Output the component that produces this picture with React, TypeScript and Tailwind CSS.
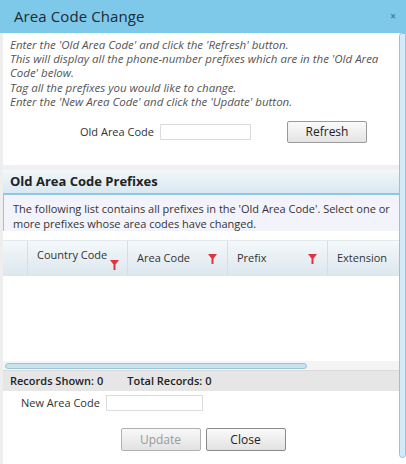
import React from 'react';

const Filter = () => (
  <svg width="9" height="10" viewBox="0 0 9 10" className="shrink-0">
    <path d="M0 0 H9 L5.5 4.5 V10 H3.5 V4.5 Z" fill="#e0343c" />
  </svg>
);

export default function App() {
  return (
    <div
      className="w-[406px] h-[464px] bg-white flex flex-col overflow-hidden text-[#333]"
      style={{ fontFamily: '"Open Sans", "Liberation Sans", sans-serif' }}
    >
      <div className="h-[33px] shrink-0 bg-[#7ec8ea] flex items-center justify-between pl-[14px] pr-[10px]">
        <span className="text-[15px] text-[#1e2a33] tracking-[0.1px]">Area Code Change</span>
        <span className="text-[10px] text-[#4a7f9c] font-bold">×</span>
      </div>

      <div className="flex flex-1 min-h-0">
        <div className="w-[3px] bg-[#eeeeee] shrink-0" />
        <div className="flex-1 flex flex-col min-w-0">
          <div className="pl-[7px] pt-[5px] text-[11.5px] leading-[14.2px] italic text-[#555]">
            <div>Enter the 'Old Area Code' and click the 'Refresh' button.</div>
            <div>This will display all the phone-number prefixes which are in the 'Old Area Code' below.</div>
            <div>Tag all the prefixes you would like to change.</div>
            <div>Enter the 'New Area Code' and click the 'Update' button.</div>
          </div>
          <div className="flex items-center mt-[11px] h-[24px] text-[11px] text-[#333]">
            <span className="ml-[77px] w-[80px]">Old Area Code</span>
            <div className="w-[91px] h-[16px] border border-[#dcdcdc] bg-white" />
            <button className="ml-[36px] w-[80px] h-[22px] border border-[#9a9a9a] rounded-[2px] bg-gradient-to-b from-[#fafafa] to-[#e4e4e4] text-[12px] text-[#222]">
              Refresh
            </button>
          </div>
          <div className="h-[5px] mt-[21px] bg-[#f0f0f0]" />
          <div className="h-[25px] flex items-center pl-[7px] bg-gradient-to-b from-[#f2f7fa] to-[#d9e8f0] border-b-2 border-[#8ec7e4] text-[13px] font-bold text-[#222]">
            Old Area Code Prefixes
          </div>
          <div className="h-[36px] bg-[#f3f3fb] border-l border-[#8ec7e4] pl-[9px] pt-[6px] text-[11px] leading-[15px] text-[#333]">
            The following list contains all prefixes in the 'Old Area Code'. Select one or more prefixes whose area codes have changed.
          </div>
          <div className="h-[9px] bg-white" />
          <div className="h-[36px] flex bg-gradient-to-b from-[#f4f8fa] to-[#dbe7ee] text-[11px] text-[#333] border-t border-[#e2e8ec]">
            <div className="w-[25px] border-r border-[#d6dee3]" />
            <div className="w-[100px] border-r border-[#d6dee3] pl-[9px] pt-[6px] relative">
              Country Code
              <span className="absolute left-[82px] top-[19px]"><Filter /></span>
            </div>
            <div className="w-[100px] border-r border-[#d6dee3] pl-[9px] pr-[10px] flex items-center justify-between">
              <span>Area Code</span>
              <Filter />
            </div>
            <div className="w-[100px] border-r border-[#d6dee3] pl-[9px] pr-[10px] flex items-center justify-between">
              <span>Prefix</span>
              <Filter />
            </div>
            <div className="flex-1 pl-[9px] flex items-center">Extension</div>
          </div>
          <div className="h-[85px] bg-white" />
          <div className="h-[9px] flex items-center bg-[#f4f4f4] pl-[2px]">
            <div className="w-[302px] h-[6px] rounded-full bg-[#c8e2ee] border border-[#9fc6d8]" />
          </div>
          <div className="h-[21px] flex items-center pl-[7px] bg-[#e6e6e6] border-t border-[#dadada] text-[11px] font-semibold text-[#222]">
            <span>Records Shown: 0</span>
            <span className="ml-[24px]">Total Records: 0</span>
          </div>
          <div className="flex items-center mt-[4px] h-[16px] text-[11px] text-[#333]">
            <span className="ml-[18px] w-[85px]">New Area Code</span>
            <div className="w-[97px] h-[16px] border border-[#dcdcdc] bg-white" />
          </div>
          <div className="flex justify-center gap-[5px] mt-[17px] pl-[4px]">
            <button className="w-[80px] h-[23px] border border-[#b0b0b0] rounded-[2px] bg-gradient-to-b from-[#f8f8f8] to-[#e2e2e2] text-[12px] text-[#9a9a9a]">
              Update
            </button>
            <button className="w-[80px] h-[23px] border border-[#8a8a8a] rounded-[2px] bg-gradient-to-b from-[#fafafa] to-[#e2e2e2] text-[12px] text-[#222]">
              Close
            </button>
          </div>
        </div>
        <div className="w-[7px] shrink-0 mb-[6px] bg-[#d3ebf8] border border-[#9fbfd2] rounded-b-[4px] rounded-tl-[3px]" />
      </div>
    </div>
  );
}
